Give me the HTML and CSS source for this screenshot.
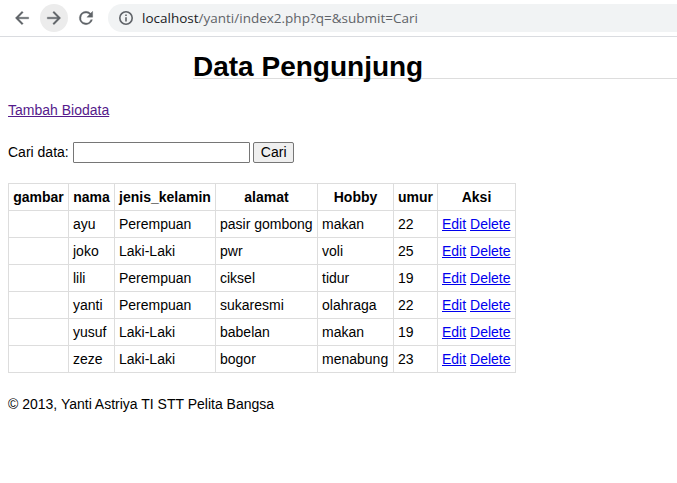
FILE: index.html
```html
<!DOCTYPE html>
<html lang="id">
<head>
<meta charset="utf-8">
<title>Data Pengunjung</title>
<link rel="stylesheet" href="styles.css">
</head>
<body>
<header class="toolbar">
  <span class="nav-btn"><svg width="20" height="20" viewBox="0 0 24 24"><path class="solid" d="M20 11H7.83l5.59-5.59L12 4l-8 8 8 8 1.41-1.41L7.83 13H20v-2z"/></svg></span>
  <span class="nav-btn active"><svg width="20" height="20" viewBox="0 0 24 24"><path class="solid" d="M12 4l-1.41 1.41L16.17 11H4v2h12.17l-5.58 5.59L12 20l8-8z"/></svg></span>
  <span class="nav-btn"><svg width="20" height="20" viewBox="0 0 24 24"><path class="solid" d="M17.65 6.35A7.96 7.96 0 0 0 12 4a8 8 0 1 0 7.73 10h-2.08A6 6 0 1 1 12 6c1.66 0 3.14.69 4.22 1.78L13 11h7V4l-2.35 2.35z"/></svg></span>
  <div class="address">
    <svg width="14" height="14" viewBox="0 0 14 14"><circle cx="7" cy="7" r="6.2"/><path d="M7 6.2v4.2M7 3.5v1.4"/></svg>
    <span class="url"><b>localhost</b>/yanti/index2.php?q=&amp;submit=Cari</span>
  </div>
</header>
<main>
  <h1><span>Data Pengunjung</span></h1>
  <a class="add" href="#">Tambah Biodata</a>
  <form class="search"><label for="q">Cari data:</label><input id="q" type="text"><button type="button">Cari</button></form>
  <table>
    <colgroup><col class="c1"><col class="c2"><col class="c3"><col class="c4"><col class="c5"><col class="c6"><col class="c7"></colgroup>
    <tr><th>gambar</th><th>nama</th><th>jenis_kelamin</th><th>alamat</th><th>Hobby</th><th>umur</th><th>Aksi</th></tr>
    <tr><td></td><td>ayu</td><td>Perempuan</td><td>pasir gombong</td><td>makan</td><td>22</td><td><a href="#">Edit</a> <a href="#">Delete</a></td></tr>
    <tr><td></td><td>joko</td><td>Laki-Laki</td><td>pwr</td><td>voli</td><td>25</td><td><a href="#">Edit</a> <a href="#">Delete</a></td></tr>
    <tr><td></td><td>lili</td><td>Perempuan</td><td>ciksel</td><td>tidur</td><td>19</td><td><a href="#">Edit</a> <a href="#">Delete</a></td></tr>
    <tr><td></td><td>yanti</td><td>Perempuan</td><td>sukaresmi</td><td>olahraga</td><td>22</td><td><a href="#">Edit</a> <a href="#">Delete</a></td></tr>
    <tr><td></td><td>yusuf</td><td>Laki-Laki</td><td>babelan</td><td>makan</td><td>19</td><td><a href="#">Edit</a> <a href="#">Delete</a></td></tr>
    <tr><td></td><td>zeze</td><td>Laki-Laki</td><td>bogor</td><td>menabung</td><td>23</td><td><a href="#">Edit</a> <a href="#">Delete</a></td></tr>
  </table>
  <footer>© 2013, Yanti Astriya TI STT Pelita Bangsa</footer>
</main>
</body>
</html>
```
FILE: styles.css
```css
* { box-sizing: border-box; }
body { margin: 0; background: #fff; color: #000; font: 14px/18px "Liberation Sans", Arial, sans-serif; overflow: hidden; }
.toolbar { display: flex; align-items: center; height: 37px; padding-left: 8px; gap: 4px; border-bottom: 1px solid #dadce0; }
.nav-btn { display: flex; align-items: center; justify-content: center; width: 28px; height: 28px; border-radius: 50%; }
.nav-btn.active { background: #ececec; }
svg { display: block; fill: none; stroke: #5f6368; stroke-width: 2; }
svg .solid { fill: #5f6368; stroke: #5f6368; stroke-width: 0.4; }
.address { display: flex; align-items: center; gap: 9px; flex: 1; height: 28px; margin-left: 4px; padding-left: 11px; background: #f1f3f4; border-radius: 14px 0 0 14px; }
.address svg { stroke-width: 1.6; }
.url { font: 13.5px/20px "Open Sans", sans-serif; color: #5f6368; }
.url b { font-weight: 400; color: #202124; }
main { padding-left: 8px; }
h1 { display: flex; margin: 12px 0 0 185px; height: 30px; border-bottom: 1px solid #ddd; font-size: 28px; line-height: 36px; white-space: nowrap; }
.add { display: block; width: max-content; margin-top: 22px; color: #551a8b; }
.search { display: flex; align-items: center; height: 22px; margin-top: 22px; }
.search input { width: 177px; height: 21px; margin: 0 3px 0 4px; border: 1px solid #767676; border-radius: 1px; }
.search button { width: 41px; height: 21px; padding: 0 0 0 1px; border: 1px solid #767676; border-radius: 2px; background: #efefef; font: 14px/18px "Liberation Sans", Arial, sans-serif; color: #000; }
table { width: 508px; table-layout: fixed; border-collapse: collapse; margin-top: 20px; }
.c1 { width: 60px; } .c2 { width: 46px; } .c3 { width: 101px; } .c4 { width: 102px; } .c5 { width: 76px; } .c6 { width: 44px; } .c7 { width: 78px; }
tr { height: 27px; }
th, td { border: 1px solid #ddd; padding: 4px; white-space: nowrap; text-align: left; }
th { text-align: center; }
td a { color: #00e; }
footer { margin-top: 22px; }
```
